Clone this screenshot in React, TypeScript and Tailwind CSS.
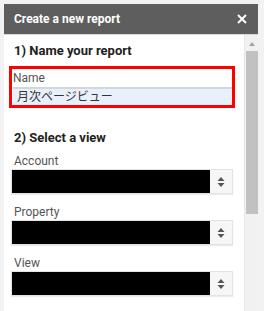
import React from 'react';

function UpDown() {
  return (
    <svg width="8" height="12" viewBox="0 0 8 12" className="text-[#555]">
      <path d="M4 1 L7.5 5 H0.5 Z" fill="currentColor" />
      <path d="M4 11 L7.5 7 H0.5 Z" fill="currentColor" />
    </svg>
  );
}

function SelectField({ label, first }: { label: string; first?: boolean }) {
  return (
    <div className={first ? 'mt-[6px]' : 'mt-[10px]'}>
      <p className="text-[12px] leading-[16px] text-[#555]">{label}</p>
      <div className="ml-[-3px] flex h-[25px] w-[222px] border border-[#e3e3e3] bg-[#f6f6f6] shadow-[0_1px_1px_rgba(0,0,0,0.08)]">
        <div className="h-full w-[198px] bg-black" />
        <div className="flex flex-1 items-center justify-center">
          <UpDown />
        </div>
      </div>
    </div>
  );
}

export default function App() {
  return (
    <div
      className="h-[311px] w-[264px] overflow-hidden bg-[#f2f2f2] pt-[4px] pl-[4px] pr-[6px]"
      style={{ fontFamily: 'Roboto, "Noto Sans CJK JP", sans-serif' }}
    >
      <div className="flex h-[31px] items-center justify-between bg-[#5e5e5e] pl-[10px] pr-[11px] border-b border-[#d8d8d8]">
        <span className="text-[12px] font-bold text-white">Create a new report</span>
        <svg width="10" height="10" viewBox="0 0 10 10">
          <path d="M1 1 L9 9 M9 1 L1 9" stroke="white" strokeWidth="2" />
        </svg>
      </div>
      <div className="flex h-[276px] bg-white">
        <div className="flex-1 pl-[10px] pt-[7px]">
          <h2 className="text-[13px] font-bold leading-[18px] text-[#222]">1) Name your report</h2>
          <div className="mt-[6px] ml-[-5px] w-[226px] border-[3px] border-[#ff0000] pt-[1px]">
            <p className="pl-[1px] text-[12px] leading-[16px] text-[#555]">Name</p>
            <div className="mt-[1px] ml-[1px] h-[18px] border-t-2 border-[#d6d6d6] bg-[#e8f0fe] pl-[4px] text-[12px] leading-[16px] text-[#333]">
              月次ページビュー
            </div>
          </div>
          <h2 className="mt-[21px] text-[13px] font-bold leading-[18px] text-[#222]">2) Select a view</h2>
          <SelectField label="Account" first />
          <SelectField label="Property" />
          <SelectField label="View" />
        </div>
        <div className="flex w-[14px] flex-col items-center bg-[#f1f1f1] border-l border-[#e6e6e6]">
          <svg width="8" height="6" viewBox="0 0 8 6" className="mt-[6px]">
            <path d="M4 1 L7 5 H1 Z" fill="#a3a3a3" />
          </svg>
          <div className="mt-[4px] h-[163px] w-[12px] bg-[#c1c1c1]" />
        </div>
      </div>
    </div>
  );
}
